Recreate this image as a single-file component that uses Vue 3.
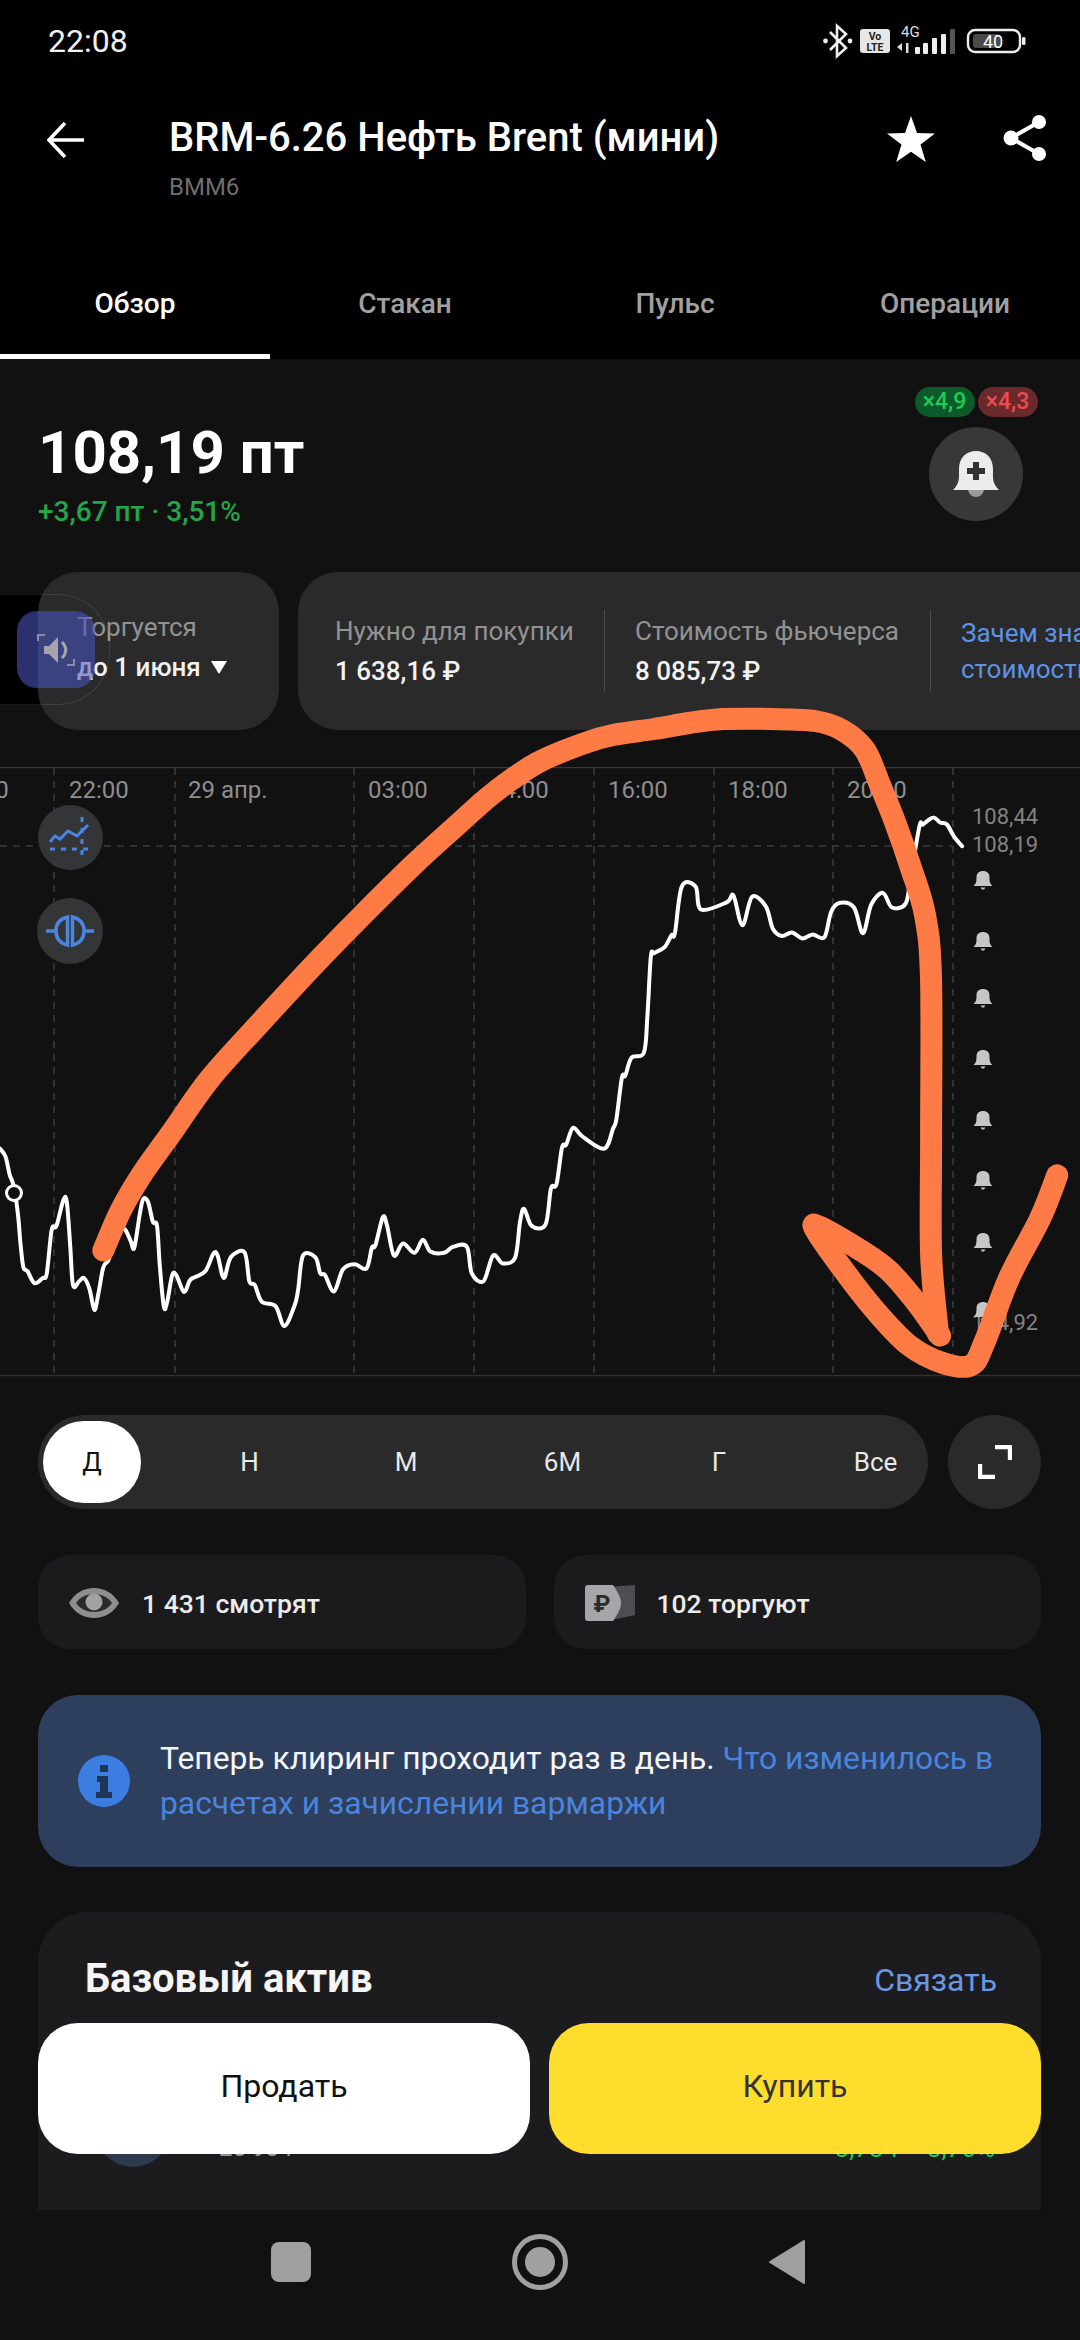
<script setup>
const toFull = ([x, y]) => [x / 1.452, 780 + y / 2.529]
const linePts = [[0,935],[8,955],[14,1000],[20,1030],[26,1100],[30,1180],[34,1235],[40,1245],[50,1275],[62,1262],[68,1250],[75,1140],[82,1130],[92,1065],[97,1070],[102,1180],[106,1280],[115,1270],[122,1262],[130,1290],[137,1343],[143,1300],[150,1235],[158,1215],[165,1170],[175,1140],[182,1140],[190,1170],[195,1185],[203,1100],[208,1062],[215,1070],[222,1120],[228,1130],[232,1230],[238,1335],[243,1320],[250,1255],[256,1255],[267,1297],[275,1270],[280,1262],[298,1245],[310,1200],[316,1205],[325,1262],[335,1210],[355,1197],[362,1270],[370,1280],[380,1322],[400,1333],[413,1383],[428,1330],[433,1290],[440,1205],[458,1210],[465,1250],[472,1255],[485,1296],[498,1240],[515,1227],[532,1238],[540,1185],[545,1180],[556,1108],[562,1130],[572,1205],[585,1175],[602,1198],[614,1165],[625,1195],[645,1198],[658,1183],[678,1183],[685,1250],[702,1270],[716,1205],[730,1225],[748,1210],[755,1120],[761,1087],[772,1130],[792,1127],[800,1035],[808,1025],[816,932],[822,925],[832,882],[845,903],[877,935],[890,885],[895,860],[903,755],[908,750],[917,705],[935,692],[940,600],[945,450],[950,440],[965,425],[975,395],[980,390],[990,272],[1010,272],[1018,330],[1055,312],[1065,295],[1078,370],[1092,298],[1112,322],[1122,378],[1135,397],[1150,388],[1165,403],[1180,393],[1197,400],[1207,335],[1220,313],[1240,325],[1253,390],[1265,318],[1282,288],[1295,325],[1315,315],[1322,250],[1335,120],[1340,115],[1355,97],[1365,110],[1375,115],[1385,145],[1397,170]]

const smooth = (p) => {
  let d = `M${p[0][0].toFixed(1)} ${p[0][1].toFixed(1)}`
  for (let i = 0; i < p.length - 1; i++) {
    const a = p[i - 1] || p[i], b = p[i], c = p[i + 1], e = p[i + 2] || c
    const c1 = [b[0] + (c[0] - a[0]) / 6, b[1] + (c[1] - a[1]) / 6]
    const c2 = [c[0] - (e[0] - b[0]) / 6, c[1] - (e[1] - b[1]) / 6]
    d += ` C${c1[0].toFixed(1)} ${c1[1].toFixed(1)} ${c2[0].toFixed(1)} ${c2[1].toFixed(1)} ${c[0].toFixed(1)} ${c[1].toFixed(1)}`
  }
  return d
}
const priceLine = smooth(linePts.map(toFull))
const scribbleA = [[150,1190],[175,1090],[205,1000],[250,890],[305,755],[380,610],[460,460],[530,335],[600,215],[660,120],[715,35]].map(toFull)
  .concat([[537,763],[585,743],[613,735],[654,729],[689,723],[723,719],[771,719],[815,721],[842,730],[865,750],[880,785],[895,822],[911,868],[925,915],[931,978]])
  .concat([[1352,900],[1352,1200],[1362,1400]].map(toFull))
const scribbleB = [[1365,1405],[1330,1320],[1290,1240],[1250,1190],[1190,1130],[1185,1140],[1225,1240],[1270,1340],[1320,1430],[1370,1475],[1410,1480],[1430,1420],[1465,1260],[1510,1110],[1535,1000]].map(toFull)
const scribble = [smooth(scribbleA), smooth(scribbleB)]

const gridX = [54, 175, 354, 474, 594, 714, 833, 953]
const timeLabels = [
  { x: -51, t: '20:00' }, { x: 69, t: '22:00' }, { x: 188, t: '29 апр.' }, { x: 368, t: '03:00' },
  { x: 489, t: '14:00' }, { x: 608, t: '16:00' }, { x: 728, t: '18:00' }, { x: 847, t: '20:00' }
]
const priceLabels = [{ y: 825, t: '108,44' }, { y: 853, t: '108,19' }, { y: 1331, t: '104,92' }]
const bellY = [881, 942, 999, 1060, 1121, 1181, 1243, 1312]
const periods = ['Д', 'Н', 'М', '6М', 'Г', 'Все']
const tabs = ['Обзор', 'Стакан', 'Пульс', 'Операции']
</script>

<template>
  <div class="page">
    <header class="top">
      <div class="status">
        <span class="time">22:08</span>
        <svg class="status-icons" width="206" height="40" viewBox="823 21 206 40">
          <path d="M830 32 L846 48 L837 56 V26 L846 34 L830 50" fill="none" stroke="#eee" stroke-width="2.6"/>
          <circle cx="825.5" cy="41" r="2.4" fill="#eee"/><circle cx="850" cy="41" r="2.4" fill="#eee"/>
          <rect x="860" y="29" width="30" height="24" rx="3" fill="#e6e6e6"/>
          <text x="875" y="39.5" class="volte">Vo</text>
          <text x="875" y="50.5" class="volte">LTE</text>
          <text x="901" y="37" class="four-g">4G</text>
          <path d="M902 43 l-5 4 5 4z M906 43 h2.5 v10 h-2.5z" fill="#ddd"/>
          <rect x="915" y="47" width="5" height="7" rx="1" fill="#eee"/>
          <rect x="923" y="43" width="5" height="11" rx="1" fill="#eee"/>
          <rect x="932" y="38" width="5" height="16" rx="1" fill="#eee"/>
          <rect x="941" y="34" width="5" height="20" rx="1" fill="#eee"/>
          <rect x="950" y="29" width="5" height="25" rx="1" fill="#555"/>
          <rect x="968" y="30" width="52" height="22" rx="7" fill="none" stroke="#eee" stroke-width="2.4"/>
          <rect x="973" y="34" width="27" height="14" rx="3" fill="#4a4a4a"/>
          <rect x="1022" y="37" width="3.5" height="8" rx="1.5" fill="#eee"/>
          <text x="993" y="47.5" class="batt">40</text>
        </svg>
      </div>
      <div class="head">
        <svg class="back" width="38" height="38" viewBox="0 0 38 38">
          <path d="M37 19 H3 M18 2 L2 19 L18 36" fill="none" stroke="#fff" stroke-width="3.6"/>
        </svg>
        <div class="head-text">
          <div class="title">BRM-6.26 Нефть Brent (мини)</div>
          <div class="ticker">BMM6</div>
        </div>
        <svg class="star" width="48" height="46" viewBox="0 0 48 46">
          <path d="M24 0 L30 17 L48 17.5 L33.5 28.5 L38.8 46 L24 35.8 L9.2 46 L14.5 28.5 L0 17.5 L18 17Z" fill="#fff"/>
        </svg>
        <svg class="share" width="44" height="46" viewBox="0 0 44 46">
          <path d="M36 7 L8 23 L36 39" fill="none" stroke="#fff" stroke-width="4"/>
          <circle cx="36" cy="7" r="7" fill="#fff"/><circle cx="8" cy="23" r="7.5" fill="#fff"/><circle cx="36" cy="39" r="7" fill="#fff"/>
        </svg>
      </div>
      <nav class="tabs">
        <div v-for="(t, i) in tabs" :key="t" class="tab" :class="{ active: i === 0 }">{{ t }}</div>
      </nav>
    </header>

    <main class="main">
      <div class="float-back"></div>
      <section class="price-row">
        <div class="price-col">
          <div class="price">108,19 пт</div>
          <div class="change">+3,67 пт · 3,51%</div>
        </div>
        <div class="alert-col">
          <div class="badges">
            <span class="badge green">×4,9</span>
            <span class="badge red">×4,3</span>
          </div>
          <div class="bell-btn">
            <svg width="48" height="46" viewBox="0 0 48 46">
              <circle cx="24" cy="38" r="8" fill="#9a9a9a"/>
              <path d="M1 39 C8 32 7 27 7 18 C7 6 15 0 24 0 C33 0 41 6 41 18 C41 27 40 32 47 39Z" fill="#ececec"/>
              <path d="M21 11 h6 v6 h6 v6 h-6 v6 h-6 v-6 h-6 v-6 h6z" fill="#333"/>
            </svg>
          </div>
        </div>
      </section>

      <section class="cards">
        <div class="info-card short">
          <div class="lbl">Торгуется</div>
          <div class="val">до 1 июня <i class="caret"></i></div>
        </div>
        <div class="info-card wide">
          <div class="cell first">
            <div class="lbl">Нужно для покупки</div>
            <div class="val">1 638,16 ₽</div>
          </div>
          <div class="cell second">
            <div class="lbl">Стоимость фьючерса</div>
            <div class="val">8 085,73 ₽</div>
          </div>
          <div class="cell why">Зачем знать<br>стоимость</div>
        </div>
      </section>

      <section class="chart">
        <svg width="1080" height="610" viewBox="0 768 1080 610">
          <line x1="0" y1="768.5" x2="1080" y2="768.5" stroke="#3a3a3b" stroke-width="1.5"/>
          <line x1="0" y1="1376.5" x2="1080" y2="1376.5" stroke="#2f2f30" stroke-width="1.5"/>
          <line v-for="x in gridX" :key="x" :x1="x" y1="769" :x2="x" y2="1376" class="grid"/>
          <line x1="0" y1="847" x2="953" y2="847" class="grid"/>
          <text v-for="l in timeLabels" :key="l.x" :x="l.x" y="799" class="axis">{{ l.t }}</text>
          <text v-for="l in priceLabels" :key="l.y" x="972" :y="l.y" class="axis small">{{ l.t }}</text>
          <g v-for="y in bellY" :key="y" :transform="`translate(983 ${y})`">
            <path d="M-9.5 6 C-6.5 3.5 -6.5 1 -6.5 -3 C-6.5 -7 -3.5 -9 0 -9 C3.5 -9 6.5 -7 6.5 -3 C6.5 1 6.5 3.5 9.5 6Z M-2.5 7.5 H2.5 L1 9.5 H-1Z" fill="#c6c6c7"/>
          </g>
          <path :d="priceLine" fill="none" stroke="#fff" stroke-width="4" stroke-linejoin="round" stroke-linecap="round"/>
          <circle cx="14" cy="1194" r="7.5" fill="#111112" stroke="#fff" stroke-width="3"/>

          <circle cx="70.5" cy="838.5" r="32.5" fill="#343536"/>
          <path d="M50 843 L55 837 L60 840 L68 832 L77 837 L88 826" fill="none" stroke="#4a86e0" stroke-width="3"/>
          <path d="M50 850 H91 M82 818 V860" fill="none" stroke="#4a86e0" stroke-width="3" stroke-dasharray="5 6"/>
          <circle cx="70" cy="932" r="33" fill="#343536"/>
          <path d="M46 932 H57 M83 932 H94" stroke="#4a86e0" stroke-width="3.5"/>
          <path d="M67.5 918 V946 C59 944 56 939 56 932 C56 925 59 920 67.5 918Z M72.5 918 V946 C81 944 84 939 84 932 C84 925 81 920 72.5 918Z" fill="#343536" stroke="#4a86e0" stroke-width="3.5"/>
        </svg>
      </section>

      <section class="period-row">
        <div class="periods">
          <span v-for="(p, i) in periods" :key="p" class="period" :class="{ on: i === 0 }">{{ p }}</span>
        </div>
        <div class="expand">
          <svg width="34" height="34" viewBox="0 0 34 34">
            <path d="M17 2 H32 V15 M2 19 V32 H17" fill="none" stroke="#fff" stroke-width="4.4" stroke-linejoin="round"/>
          </svg>
        </div>
      </section>

      <section class="stats">
        <div class="stat">
          <svg class="stat-ico" width="52" height="32" viewBox="0 0 52 32">
            <path d="M1 16 C12 -4 40 -4 51 16 C40 36 12 36 1 16Z" fill="#8e8e90"/>
            <path d="M8 16 C16 4 36 4 44 16 C36 28 16 28 8 16Z" fill="#2b2b2d"/>
            <circle cx="26" cy="15" r="8.5" fill="#a2a2a4"/>
          </svg>
          <span>1 431 смотрят</span>
        </div>
        <div class="stat">
          <svg class="stat-ico rub" width="50" height="36" viewBox="0 0 50 36">
            <path d="M22 2 L50 0 V30 L22 36Z" fill="#4d4e52"/>
            <path d="M3 0 H28 C32 6 36 12 36 18 C36 24 32 30 28 36 H3 Q0 36 0 33 V3 Q0 0 3 0Z" fill="#a5a6aa"/>
            <text x="17" y="27" class="rub-sign">₽</text>
          </svg>
          <span>102 торгуют</span>
        </div>
      </section>

      <section class="banner">
        <svg class="info-ico" width="52" height="52" viewBox="0 0 52 52">
          <circle cx="26" cy="26" r="26" fill="#3b7de0"/>
          <path d="M22 10 h8 v7 h-8z M19 21 h11 v16 h4 v6 h-16 v-6 h4 v-10 h-3z" fill="#1f3556"/>
        </svg>
        <p>Теперь клиринг проходит раз в день. <span class="link">Что изменилось в расчетах и зачислении вармаржи</span></p>
      </section>

      <section class="asset">
        <div class="asset-head">
          <h2>Базовый актив</h2>
          <span class="bind">Связать</span>
        </div>
        <div class="asset-row">
          <div class="avatar"></div>
          <div class="asset-sub">25 984</div>
          <div class="asset-delta">3,73 ₽ · 3,76%</div>
        </div>
      </section>
    </main>

    <nav class="sysnav">
      <svg width="40" height="40" viewBox="0 0 40 40"><rect width="40" height="40" rx="8" fill="#a0a0a0"/></svg>
      <svg width="56" height="56" viewBox="0 0 56 56"><circle cx="28" cy="28" r="25.5" fill="none" stroke="#a0a0a0" stroke-width="5"/><circle cx="28" cy="28" r="15" fill="#a0a0a0"/></svg>
      <svg width="38" height="46" viewBox="0 0 38 46"><path d="M36 2 V44 L2 23Z" fill="#a0a0a0" stroke="#a0a0a0" stroke-width="2" stroke-linejoin="round"/></svg>
    </nav>

    <div class="actions">
      <button class="act sell">Продать</button>
      <button class="act buy">Купить</button>
    </div>

    <div class="float-ring"></div>
    <div class="float-btn">
      <svg width="38" height="32" viewBox="0 0 38 32">
        <path d="M1 7 V1 H8 M37 25 V31 H30" fill="none" stroke="#8a8da8" stroke-width="2"/>
        <path d="M7 12 H12 L21 3 V29 L12 20 H7Z" fill="#a6a6aa"/>
        <path d="M25 8 C30 13 30 19 25 24" fill="none" stroke="#a6a6aa" stroke-width="3"/>
      </svg>
    </div>

    <svg class="scribble" width="1080" height="2340" viewBox="0 0 1080 2340">
      <path v-for="d in scribble" :key="d" :d="d" fill="none" stroke="#ff7b45" stroke-width="22" stroke-linecap="round" stroke-linejoin="round"/>
    </svg>
  </div>
</template>

<style scoped>
.page { position: relative; width: 1080px; height: 2340px; overflow: hidden; background: #111112; font-family: Roboto, "Noto Sans", sans-serif; color: #fff; display: flex; flex-direction: column; }
.top { background: #000; height: 359px; flex: none; }
.status { height: 82px; display: flex; align-items: center; justify-content: space-between; padding: 0 51px 0 48px; }
.time { font-size: 32px; color: #f2f2f2; }
.status-icons { display: block; }
.volte { font: 700 10.5px Roboto, sans-serif; fill: #222; text-anchor: middle; }
.four-g { font: 400 15px Roboto, sans-serif; fill: #ddd; }
.batt { font: 400 18px Roboto, sans-serif; fill: #fff; text-anchor: middle; }
.head { height: 158px; box-sizing: border-box; display: flex; align-items: flex-start; padding: 31px 33px 0 47px; }
.back { margin-top: 8px; flex: none; }
.head-text { margin-left: 84px; flex: 1; }
.title { font-size: 40px; line-height: 50px; font-weight: 500; white-space: nowrap; }
.ticker { margin-top: 10px; font-size: 24px; line-height: 28px; color: #6e6e6e; }
.star { margin-top: 3px; flex: none; }
.share { margin: 2px 0 0 68px; flex: none; }
.tabs { height: 119px; display: flex; }
.tab { flex: 1; display: flex; align-items: center; justify-content: center; padding-top: 13px; font-size: 28px; font-weight: 500; color: #a0a0a0; border-bottom: 5px solid transparent; }
.tab.active { color: #fff; border-bottom-color: #fff; }

.main { height: 1851px; flex: none; overflow: hidden; }
.float-back { position: absolute; left: 0; top: 594px; width: 110px; height: 111px; background: #000; border-radius: 0 52px 52px 0; }
.price-row { display: flex; justify-content: space-between; padding: 28px 42px 0 38px; }
.price-col { margin-top: 32px; }
.price { font-size: 60px; line-height: 68px; font-weight: 700; }
.change { margin-top: 7px; font-size: 28px; line-height: 36px; font-weight: 500; color: #23a548; }
.alert-col { display: flex; flex-direction: column; align-items: center; width: 124px; }
.badges { display: flex; gap: 3px; }
.badge { height: 30px; width: 60px; border-radius: 15px; font-size: 23px; line-height: 30px; font-weight: 500; text-align: center; }
.badge.green { background: #0c5a29; color: #1fcb55; }
.badge.red { background: #6a2a2c; color: #ef4a50; }
.bell-btn { width: 94px; height: 94px; margin-top: 10px; border-radius: 50%; background: #383839; display: flex; align-items: center; justify-content: center; }

.cards { position: relative; display: flex; gap: 19px; margin: 42px 0 0 38px; height: 158px; overflow: hidden; }
.info-card { background: #2a2a2b; border-radius: 40px; flex: none; }
.short { width: 241px; padding: 37px 0 0 39px; box-sizing: border-box; }
.wide { display: flex; align-items: center; padding: 0 0 0 37px; width: 900px; box-sizing: border-box; }
.lbl { font-size: 26px; line-height: 36px; color: #929293; white-space: nowrap; }
.val { margin-top: 4px; font-size: 26px; line-height: 36px; font-weight: 500; color: #f2f2f2; white-space: nowrap; }
.caret { display: inline-block; width: 0; height: 0; margin-left: 4px; vertical-align: 2px; border-left: 8.5px solid transparent; border-right: 8.5px solid transparent; border-top: 13px solid #fff; }
.cell { height: 82px; box-sizing: border-box; display: flex; flex-direction: column; justify-content: center; margin-right: 30px; border-right: 1.5px solid #4c4c4d; flex: none; }
.first { width: 270px; }
.second { width: 296px; }
.why { border-right: 0; color: #5c93e6; font-size: 26px; line-height: 36px; white-space: nowrap; }

.chart { margin-top: 37px; height: 610px; }
.chart svg { display: block; }
.grid { stroke: #3c3c3d; stroke-width: 1.5; stroke-dasharray: 7 6; }
.axis { font-family: Roboto, sans-serif; font-size: 24px; fill: #8e8e8f; }
.axis.small { font-size: 22px; fill: #828283; }

.period-row { display: flex; gap: 20px; margin: 38px 39px 0 38px; }
.periods { flex: 1; height: 94px; border-radius: 47px; background: #2a2a2b; display: flex; gap: 56.5px; align-items: center; padding-left: 5px; box-sizing: border-box; }
.period { flex: none; width: 100px; font-size: 26px; text-align: center; color: #e8e8e8; }
.period.on { width: 98px; margin-right: 2px; height: 82px; line-height: 82px; border-radius: 41px; background: #fff; color: #111; }
.expand { width: 93px; height: 94px; border-radius: 50%; background: #2a2a2b; display: flex; align-items: center; justify-content: center; }

.stats { display: grid; grid-template-columns: 1fr 1fr; gap: 28px; margin: 46px 39px 0 38px; }
.stat { height: 94px; border-radius: 32px; background: #1b1b1d; display: flex; align-items: center; padding-left: 30px; padding-top: 2px; box-sizing: border-box; font-size: 26.5px; font-weight: 500; color: #ececec; }
.stat-ico { flex: none; margin-right: 22px; }
.stat-ico.rub { margin-left: 1px; margin-right: 22px; }
.rub-sign { font: 700 24px Roboto, "DejaVu Sans", sans-serif; fill: #2a2a2c; text-anchor: middle; }

.banner { margin: 46px 39px 0 38px; height: 172px; border-radius: 40px; background: #2d3f5c; display: flex; align-items: center; padding: 0 40px; box-sizing: border-box; }
.info-ico { flex: none; margin-right: 30px; }
.banner p { margin: 0; font-size: 31.8px; line-height: 45px; color: #f4f6fa; }
.link { color: #4a84de; }

.asset { margin: 45px 39px 0 38px; height: 420px; border-radius: 50px; background: #1c1c1e; padding: 43px 46px 0 47px; box-sizing: border-box; }
.asset-head { display: flex; justify-content: space-between; align-items: center; }
.asset-head h2 { margin: 0; font-size: 40px; line-height: 48px; font-weight: 700; color: #f5f5f5; }
.bind { font-size: 32px; color: #6a97e0; transform: translate(2px, 1px); }
.asset-row { display: flex; align-items: flex-end; margin: 88px 0 0 10px; height: 76px; }
.avatar { width: 76px; height: 76px; border-radius: 50%; background: #2d3a4e; flex: none; }
.asset-sub { margin: 0 0 5px 48px; font-size: 24px; line-height: 28px; color: #999; flex: 1; }
.asset-delta { margin-bottom: 5px; font-size: 26px; line-height: 28px; color: #23c24a; }

.sysnav { height: 130px; flex: none; background: #111112; display: flex; align-items: center; padding: 0 0 26px 271px; box-sizing: border-box; }
.sysnav svg:nth-child(2) { margin-left: 201px; }
.sysnav svg:nth-child(3) { margin-left: 200px; }

.actions { position: absolute; left: 38px; right: 39px; top: 2023px; display: grid; grid-template-columns: 1fr 1fr; gap: 19px; }
.act { height: 131px; border: 0; border-radius: 40px; padding: 0 0 5px; font-family: inherit; font-size: 32px; }
.sell { background: #fff; color: #111; }
.buy { background: #ffdd2d; color: #333; }

.float-ring { position: absolute; left: 0; top: 594px; width: 110px; height: 111px; box-sizing: border-box; border: 1.5px solid rgba(255,255,255,.1); border-left: 0; border-radius: 0 52px 52px 0; }
.float-btn { position: absolute; left: 17px; top: 611px; width: 78px; height: 77px; border-radius: 20px; background: rgba(72,84,190,.58); display: flex; align-items: center; justify-content: center; }

.scribble { position: absolute; left: 0; top: 0; pointer-events: none; }
</style>
